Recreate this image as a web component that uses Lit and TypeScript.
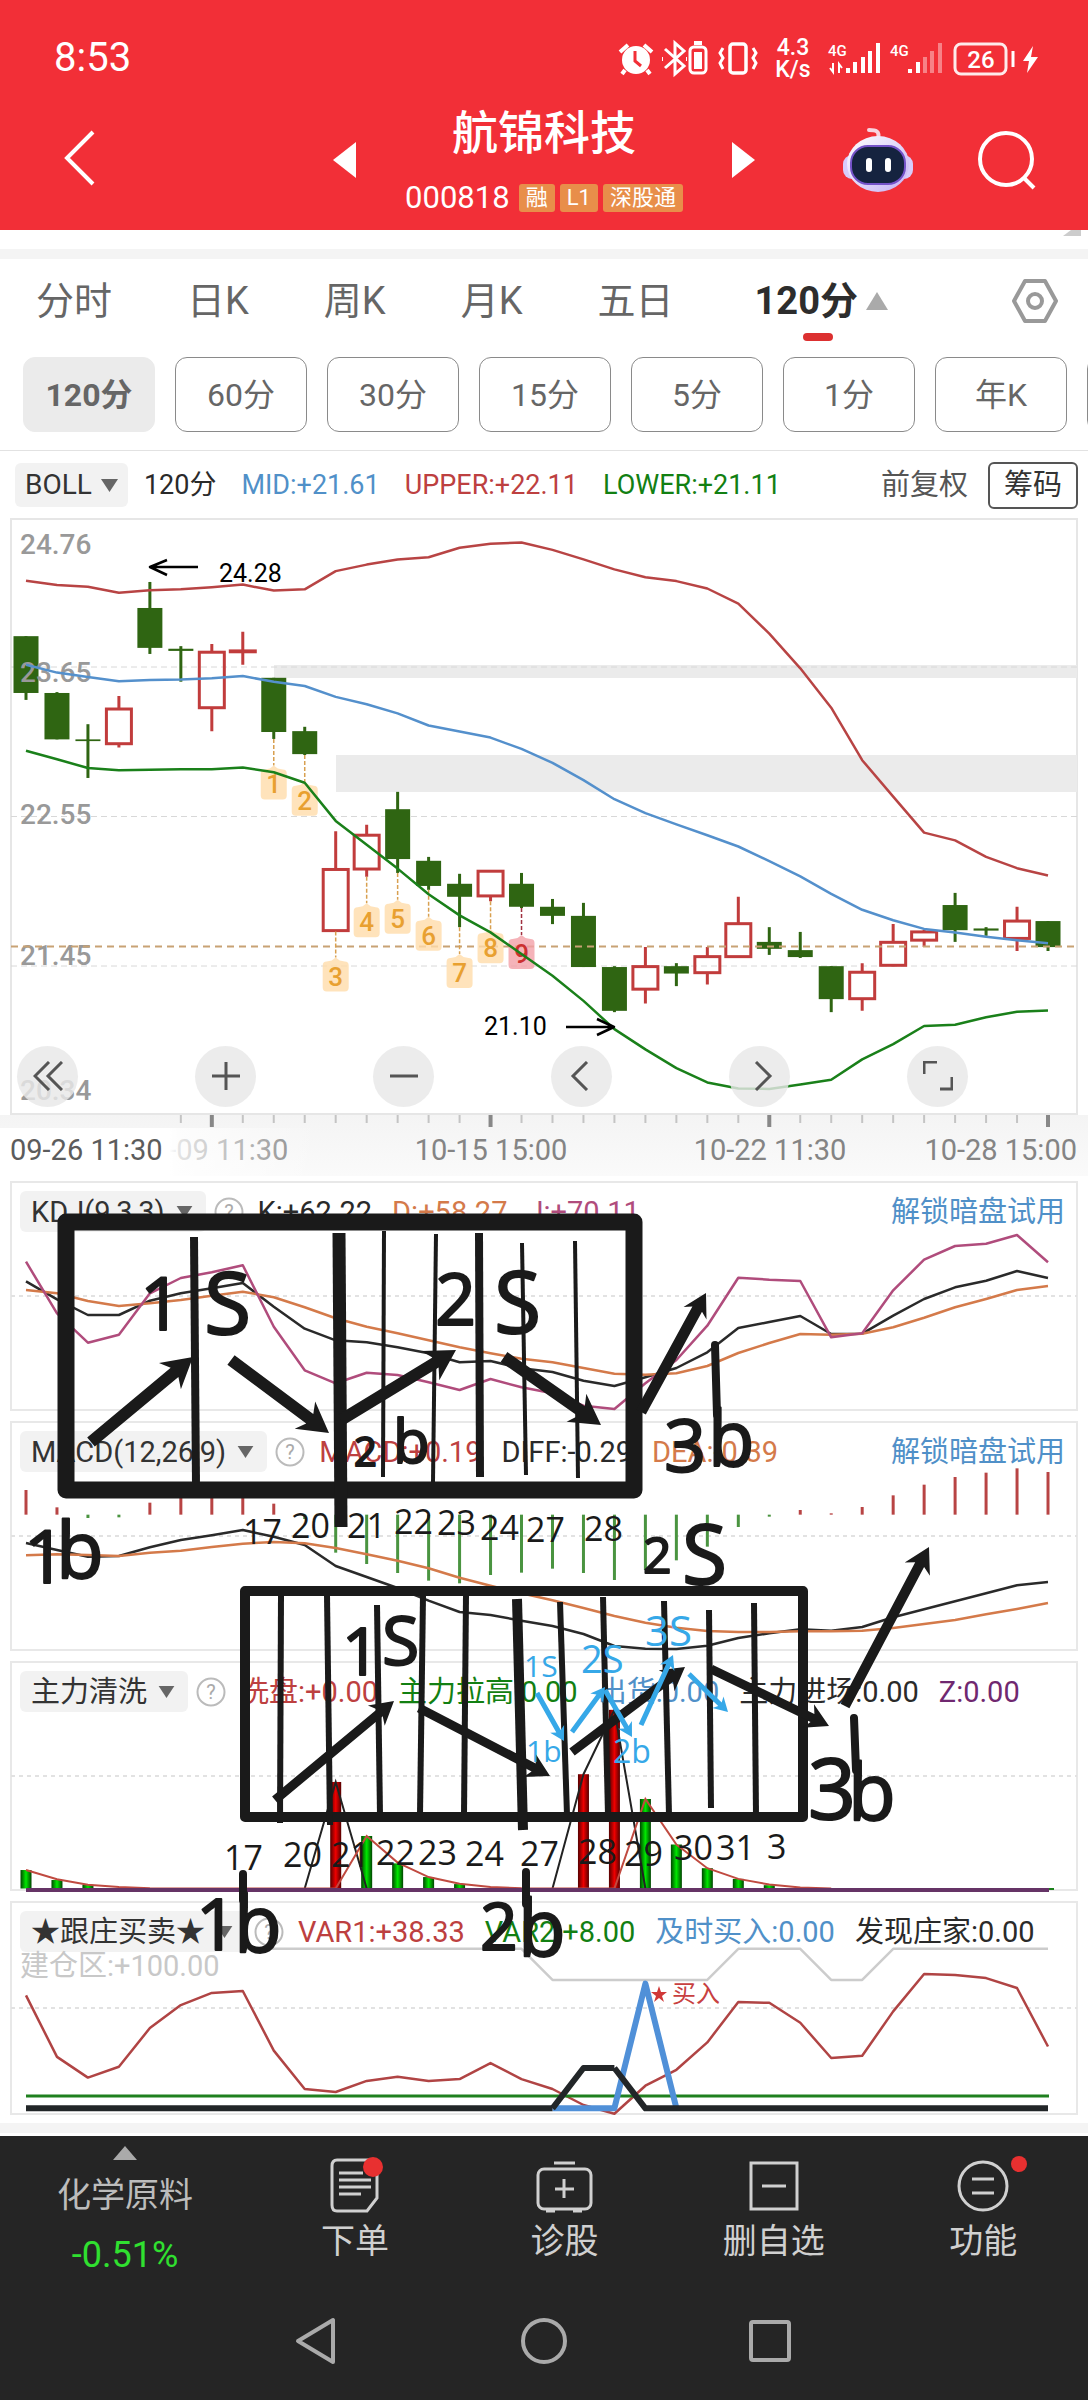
import { LitElement, html, svg, css } from "lit";
import { customElement } from "lit/decorators.js";
import { classMap } from "lit/directives/class-map.js";

const STEP = 30.97;
const FIRST = 26;
const cx = (i: number) => FIRST + i * STEP;

type Scale = (v: number) => number;
const priceY: Scale = (v) => 500 + v / 2.306;
const oscY: Scale = (v) => 1170 + v / 3;
const flowY: Scale = (v) => 1560 + v / 2.703;

const line = (values: number[], y: Scale, start = 0) =>
  values.map((v, i) => `${cx(start + i).toFixed(1)},${y(v).toFixed(1)}`).join(" ");

/* kind, body top, body bottom, wick top, wick bottom */
type Candle = ["g" | "r", number, number, number, number];
const CANDLES: Candle[] = [
  ["g", 314, 445, 314, 461], ["g", 445, 552, 443, 552], ["g", 552, 556, 517, 641],
  ["r", 482, 562, 452, 571], ["g", 249, 341, 189, 355], ["g", 343, 348, 337, 419],
  ["r", 351, 479, 332, 533], ["r", 348, 350, 304, 380], ["g", 410, 535, 410, 551],
  ["g", 533, 586, 523, 588], ["r", 852, 993, 764, 995], ["r", 773, 851, 749, 869],
  ["g", 713, 828, 673, 860], ["g", 832, 890, 823, 899], ["g", 885, 915, 862, 985],
  ["r", 856, 913, 854, 925], ["g", 885, 938, 860, 941], ["g", 938, 959, 920, 978],
  ["g", 959, 1077, 929, 1077], ["g", 1077, 1178, 1075, 1181], ["r", 1076, 1128, 1031, 1161],
  ["g", 1075, 1092, 1068, 1121], ["r", 1053, 1090, 1031, 1117], ["r", 977, 1053, 915, 1055],
  ["g", 1019, 1035, 985, 1049], ["g", 1038, 1054, 996, 1056], ["g", 1075, 1151, 1075, 1181],
  ["r", 1089, 1150, 1068, 1178], ["r", 1020, 1073, 978, 1075], ["r", 996, 1015, 991, 1031],
  ["g", 934, 992, 906, 1019], ["g", 988, 993, 985, 1005], ["r", 971, 1011, 938, 1040],
  ["g", 971, 1031, 971, 1040],
];
const UPPER = [186, 196, 200, 214, 208, 206, 201, 195, 209, 206, 164, 149, 137, 132, 110, 101, 98, 115, 137, 160, 178, 187, 204, 239, 308, 388, 479, 600, 684, 767, 785, 823, 849, 866];
const MID = [380, 398, 408, 418, 415, 414, 411, 406, 419, 429, 454, 471, 492, 520, 534, 548, 574, 606, 646, 690, 722, 748, 773, 799, 833, 868, 908, 945, 969, 989, 997, 1007, 1015, 1022];
const LOWER = [578, 598, 618, 623, 622, 621, 621, 617, 628, 652, 740, 795, 850, 909, 958, 997, 1047, 1097, 1155, 1220, 1267, 1310, 1343, 1357, 1358, 1348, 1337, 1290, 1255, 1213, 1210, 1193, 1180, 1177];
const COUNT_TAGS = [612, 650, 1055, 930, 922, 961, 1047, 990, 1003];
const PRICES: [string, number][] = [["24.76", 554], ["23.65", 682], ["22.55", 824], ["21.45", 965], ["20.34", 1100]];

const K = [334, 388, 435, 435, 392, 370, 355, 339, 410, 476, 511, 517, 532, 550, 577, 573, 595, 606, 632, 648, 622, 594, 547, 474, 456, 438, 492, 491, 437, 387, 352, 332, 303, 324];
const D = [360, 370, 393, 408, 400, 390, 377, 365, 382, 412, 445, 470, 490, 511, 532, 550, 566, 577, 594, 611, 614, 610, 588, 549, 519, 492, 494, 491, 472, 443, 412, 387, 360, 348];
const J = [275, 430, 518, 494, 370, 324, 307, 286, 470, 601, 640, 608, 615, 637, 660, 627, 652, 670, 707, 717, 640, 570, 467, 323, 329, 333, 502, 490, 361, 269, 228, 221, 195, 277];

const DIFF = [1119, 1140, 1160, 1158, 1132, 1110, 1096, 1080, 1100, 1125, 1188, 1221, 1254, 1292, 1326, 1335, 1352, 1368, 1392, 1428, 1436, 1437, 1427, 1404, 1390, 1378, 1382, 1371, 1342, 1318, 1294, 1270, 1246, 1236];
const DEA = [1156, 1153, 1155, 1158, 1148, 1142, 1131, 1121, 1116, 1120, 1134, 1153, 1172, 1195, 1223, 1247, 1270, 1291, 1314, 1338, 1358, 1373, 1383, 1386, 1386, 1384, 1384, 1382, 1374, 1362, 1350, 1333, 1317, 1299];
const MACD_ZERO = 1034;
const MACD = [960, 1012, 1044, 1042, 998, 965, 965, 965, 1001, 1047, 1148, 1182, 1209, 1232, 1240, 1215, 1208, 1196, 1209, 1230, 1200, 1171, 1130, 1071, 1040, 1020, 1030, 1011, 976, 944, 921, 908, 895, 906];

const FLOW_ZERO = 888;
const FLOW_BARS: [number, number, "r" | "g"][] = [
  [0, 838, "g"], [1, 865, "g"], [2, 878, "g"], [10, 600, "r"], [11, 746, "g"], [12, 820, "g"],
  [13, 857, "g"], [14, 876, "g"], [18, 579, "r"], [19, 405, "r"], [20, 646, "g"], [21, 769, "g"],
  [22, 833, "g"], [23, 862, "g"], [24, 879, "g"],
];
const FLOW_LINE = [838, 863, 878, 884, 887, 888, 888, 888, 888, 888, 888, 746, 818, 857, 875, 884, 887, 888, 888, 888, 646, 769, 833, 862, 877, 885, 888];

const VAR1 = [1177, 1343, 1399, 1370, 1265, 1203, 1170, 1165, 1326, 1430, 1438, 1408, 1397, 1408, 1403, 1360, 1403, 1430, 1473, 1497, 1421, 1378, 1304, 1195, 1197, 1251, 1346, 1340, 1220, 1119, 1122, 1130, 1157, 1315];
const BUILD = Array.from({ length: 34 }, (_, i) => ((i >= 17 && i <= 22) || i === 26 || i === 27 ? 1135 : 1051));
const FOUND = Array.from({ length: 34 }, (_, i) => (i === 18 || i === 19 ? 1373 : 1482));

/* x1, y1, x2, y2, width */
const STROKES: number[][] = [
  [194, 1237, 196, 1484, 8], [339, 1233, 341, 1527, 13], [384, 1231, 383, 1477, 4], [436, 1234, 433, 1482, 4],
  [479, 1233, 480, 1477, 8], [522, 1243, 526, 1475, 4], [575, 1241, 578, 1478, 4],
  [281, 1595, 280, 1823, 6], [327, 1595, 330, 1825, 6], [377, 1605, 380, 1815, 6], [423, 1595, 420, 1815, 6],
  [466, 1595, 464, 1815, 6], [517, 1599, 523, 1830, 10], [560, 1602, 567, 1815, 6], [603, 1597, 608, 1815, 6],
  [664, 1601, 669, 1815, 6], [709, 1610, 711, 1808, 6], [754, 1603, 756, 1815, 6],
];
/* tail x, tail y, tip x, tip y, shaft width, head length */
const ARROWS: number[][] = [
  [91, 1442, 193, 1357, 12, 30], [231, 1360, 329, 1433, 12, 30], [341, 1420, 456, 1350, 12, 30],
  [504, 1357, 601, 1425, 12, 30], [641, 1412, 706, 1293, 11, 23],
  [275, 1800, 394, 1701, 9, 23], [419, 1708, 550, 1776, 9, 23], [572, 1752, 685, 1667, 9, 23],
  [711, 1669, 829, 1726, 9, 23], [845, 1706, 929, 1547, 10, 25],
];
const BLUE_ARROWS: number[][] = [
  [537, 1693, 564, 1741, 5, 14], [572, 1732, 605, 1687, 5, 14], [605, 1690, 632, 1737, 5, 14],
  [641, 1725, 673, 1655, 5, 14], [689, 1674, 728, 1712, 5, 14],
];
/* characters with x, baseline, size */
type Glyph = [string, number, number, number];
const NOTES: Glyph[][] = [
  [["1", 140, 1330, 74], ["S", 204, 1334, 86]],
  [["2", 435, 1325, 72], ["S", 494, 1333, 86]],
  [["2", 354, 1466, 40], ["b", 393, 1463, 60]],
  [["3", 664, 1472, 74], ["b", 708, 1466, 76]],
  [["1", 24, 1583, 74], ["b", 56, 1578, 78]],
  [["2", 643, 1573, 50], ["S", 682, 1584, 82]],
  [["1", 342, 1675, 66], ["S", 382, 1665, 68]],
  [["1", 196, 1950, 72], ["b", 234, 1952, 78]],
  [["2", 480, 1950, 66], ["b", 518, 1956, 78]],
  [["3", 808, 1819, 84], ["b", 848, 1820, 78]],
];
const DAYS: [string, number, number][] = [
  ["17", 243, 1544], ["20", 291, 1538], ["21", 347, 1538], ["22", 394, 1534], ["23", 437, 1535], ["24", 480, 1540],
  ["27", 526, 1542], ["28", 584, 1541], ["17", 224, 1870], ["20", 283, 1867], ["21", 331, 1867], ["22", 376, 1865],
  ["23", 418, 1865], ["24", 465, 1866], ["27", 520, 1866], ["28", 578, 1864], ["29", 624, 1866], ["30", 674, 1860],
  ["31", 716, 1860], ["3", 767, 1859],
];
const BLUE_NOTES: [string, number, number, number][] = [
  ["1S", 524, 1677, 30], ["2S", 581, 1673, 38], ["3S", 645, 1646, 42], ["1b", 526, 1762, 30], ["2b", 613, 1763, 32],
];

const arrow = ([x1, y1, x2, y2, w, head]: number[]) => {
  const len = Math.hypot(x2 - x1, y2 - y1);
  const ux = (x2 - x1) / len;
  const uy = (y2 - y1) / len;
  const at = (along: number, side: number) =>
    `${(x2 - ux * along - uy * side).toFixed(1)},${(y2 - uy * along + ux * side).toFixed(1)}`;
  const h = w / 2;
  const wing = head * 0.57;
  const neck = head * 0.8;
  return svg`<polygon points="${[at(len, h), at(neck, h), at(head, wing), at(0, 0), at(head, -wing), at(neck, -h), at(len, -h)].join(" ")}" />`;
};

interface Reading { text: string; tone: string; }
interface Panel {
  name: string; readings: Reading[]; link: boolean; below?: string;
  top: number; height: number; frameTop: number; frameBottom: number; middle: number; plot: unknown;
}

@customElement("app-root")
export class AppRoot extends LitElement {
  static styles = css`
    :host { display: block; background: #fff; font-family: Roboto, "Noto Sans CJK SC", sans-serif; color: #333; }
    * { box-sizing: border-box; }
    button { font: inherit; color: inherit; background: none; border: 0; padding: 0; margin: 0; cursor: pointer; }
    a { text-decoration: none; }
    svg { display: block; }
    .header { background: #f22f37; color: #fff; height: 230px; }
    .status { display: flex; justify-content: space-between; align-items: center; padding: 34px 48px 0 54px; }
    .clock { font-size: 40px; line-height: 48px; }
    .bar { display: grid; grid-template-columns: 1fr auto 1fr; padding: 20px 52px 0; align-items: center; }
    .back { padding-left: 12px; }
    .center { display: flex; width: 422px; justify-content: space-between; align-items: center; }
    .stock { display: flex; flex-direction: column; align-items: center; gap: 14px; }
    .name { font-size: 46px; line-height: 62px; font-weight: 500; margin: 0; }
    .code { display: flex; gap: 5px; align-items: center; font-size: 31px; line-height: 40px; }
    .badge { background: #e88e4a; border-radius: 3px; font-size: 22px; line-height: 28px; padding: 0 7px; }
    .badge:first-of-type { margin-left: 4px; }
    .tools { display: flex; justify-content: flex-end; align-items: center; gap: 65px; }
    .peek { display: flex; justify-content: flex-end; height: 19px; padding-right: 7px; }
    .band { height: 10px; background: #f4f4f4; }
    .tabs { display: flex; align-items: center; height: 98px; padding: 0 30px 14px 36px; font-size: 38px; line-height: 56px; color: #666; }
    .tablist { display: flex; flex: 1; gap: 75px; align-items: center; }
    .tab { display: flex; align-items: center; gap: 8px; position: relative; }
    .tab.on { color: #2d2d2d; font-weight: 700; margin-left: 6px; }
    .tab.on::after { content: ""; position: absolute; left: 48px; bottom: -12px; width: 30px; height: 8px; border-radius: 4px; background: #dc3030; }
    .pills { display: flex; gap: 20px; padding: 0 0 18px 23px; overflow: hidden; border-bottom: 1px solid #e2e2e2; }
    .pill { flex: none; width: 132px; height: 75px; border: 1px solid #8a8a8a; border-radius: 12px; font-size: 32px; line-height: 40px; color: #666; }
    .pill.on { background: #ebebeb; border-color: #ebebeb; font-weight: 700; }
    .boll { display: flex; align-items: center; height: 60px; padding: 8px 10px 0 15px; font-size: 27px; line-height: 40px; gap: 25px; }
    .pick { display: flex; align-items: center; gap: 11px; background: #f2f2f2; border-radius: 6px; height: 41px; padding: 0 13px 0 11px; white-space: nowrap; color: #333; }
    .boll .pick { height: 44px; gap: 9px; padding: 0 10px; margin-right: -9px; font-size: 28px; }
    .right { margin-left: auto; display: flex; align-items: center; gap: 20px; font-size: 29px; color: #555; }
    .chips { width: 90px; height: 47px; border: 2px solid #555; border-radius: 6px; color: #333; }
    .main { position: relative; }
    .chart { width: 100%; height: auto; }
    .controls { position: absolute; left: 17px; right: 11%; top: 80.4%; display: flex; justify-content: space-between; }
    .round { width: 61px; height: 61px; border-radius: 50%; background: rgba(232, 232, 232, 0.82); display: grid; place-items: center; }
    .panels { position: relative; }
    .panel { display: grid; }
    .panel > * { grid-area: 1 / 1; min-width: 0; }
    .head { align-self: start; padding: 15px 23px 0 20px; font-size: 29px; }
    .row { display: flex; align-items: center; height: 41px; line-height: 40px; white-space: nowrap; }
    .help { margin: 0 14px 0 8px; }
    .readings { display: flex; gap: 20px; }
    .unlock { margin-left: auto; color: #5090c8; }
    .below { color: #c8c8c8; line-height: 28px; }
    .ink { position: absolute; inset: 0; width: 100%; height: 100%; pointer-events: none; }
    .blue { color: #5090c8; } .red { color: #bd4040; } .green { color: #128012; }
    .orange { color: #d47a4a; } .pink { color: #b04c7c; } .purple { color: #702870; } .dark { color: #2a2a2a; }
    .axis { font-size: 28px; fill: #999; font-weight: 500; }
    .date { font-size: 29px; fill: #848484; }
    .date.first { fill: #5c5c5c; }
    .mark { font-size: 25px; fill: #000; }
    .count { font-size: 26px; font-weight: 500; text-anchor: middle; }
    .hand { font-family: "Open Sans", sans-serif; }
    .gap { height: 13px; border-bottom: 3px solid #fff; background: #f4f4f4; }
    .nav { display: grid; grid-template-columns: 23% repeat(4, 1fr); background: #252525; color: #d0d0d0; font-size: 34px; line-height: 50px; height: 150px; }
    .item { display: flex; flex-direction: column; align-items: center; padding-top: 20px; line-height: 50px; }
    .item.sector { padding-top: 10px; color: #bcbcbc; }
    .sector .title { margin-top: 10px; }
    .drop { font-size: 36px; color: #30e030; margin-top: 10px; }
    .system { display: flex; justify-content: center; align-items: flex-start; gap: 178px; padding: 31px 0 35px; background: #252525; }
  `;

  private caret(w = 17, h = 13) {
    return html`<svg width=${w} height=${h} viewBox="0 0 17 13" aria-hidden="true"><path d="M0 0H17L8.500 13Z" fill="#666" /></svg>`;
  }

  private statusIcons() {
    return html`<svg width="424" height="46" viewBox="616 34 424 46" fill="none" stroke="#fff" stroke-width="2.500" role="img" aria-label="status">
      <circle cx="636" cy="59" r="14" fill="#fff" stroke="none" />
      <path d="M620 51l8-7M652 51l-8-7M625 69l-3 4M647 69l3 4" stroke-width="4" />
      <path d="M635 50v10l6 5" stroke="#f22f37" stroke-width="3" />
      <path d="M665 48l19 17-9 8V42l9 8-19 17" stroke-width="3" />
      <path d="M662 58h1M686 58h1" stroke-width="4" />
      <rect x="690" y="46" width="16" height="26" rx="4" stroke-width="3" />
      <path d="M694 42h8" stroke-width="4" /><rect x="694" y="51" width="8" height="17" fill="#fff" stroke="none" />
      <rect x="730" y="43" width="16" height="29" rx="3" stroke-width="3.500" />
      <path d="M723 47l-3 5 3 5-3 5 3 6M753 47l3 5-3 5 3 5-3 6" stroke-width="3" />
      <g fill="#fff" stroke="none" font-size="23" font-weight="500" font-family="Roboto">
        <text x="793" y="54" text-anchor="middle">4.3</text>
        <text x="793" y="76" text-anchor="middle">K/s</text>
        <text x="828" y="55" font-size="15">4G</text><text x="890" y="55" font-size="15">4G</text>
        <text x="981" y="67" text-anchor="middle" font-size="24">26</text>
      </g>
      <path d="M833 62v9l-3-4M839 72v-9l3 4" stroke-width="2" />
      <path d="M848 72v-5M855 72v-11M863 72v-16M870 72v-22M878 72v-30" stroke-width="4" />
      <path d="M910 72v-4M918 72v-11" stroke-width="4" />
      <path d="M925 72v-16M932 72v-22M940 72v-30" stroke-width="4" opacity=".4" />
      <rect x="955" y="43" width="51" height="30" rx="6" stroke-width="3" opacity=".9" />
      <path d="M1013 50v16" stroke-width="3" />
      <path d="M1033 45l-10 15h6l-2 12 11-16h-7z" fill="#fff" stroke="none" />
    </svg>`;
  }

  private header() {
    return html`<header class="header">
      <div class="status"><span class="clock">8:53</span>${this.statusIcons()}</div>
      <div class="bar">
        <div class="back"><button aria-label="返回"><svg width="32" height="56" viewBox="0 0 32 56"><path d="M29 2L3 28l26 26" fill="none" stroke="#fff" stroke-width="4" /></svg></button></div>
        <div class="center">
          <button aria-label="上一只"><svg width="23" height="36" viewBox="0 0 23 36"><path d="M23 0v36L0 18z" fill="#fff" /></svg></button>
          <div class="stock">
            <h1 class="name">航锦科技</h1>
            <div class="code">000818<span class="badge">融</span><span class="badge">L1</span><span class="badge">深股通</span></div>
          </div>
          <button aria-label="下一只"><svg width="23" height="36" viewBox="0 0 23 36"><path d="M0 0v36L23 18z" fill="#fff" /></svg></button>
        </div>
        <div class="tools">
          <button aria-label="助手"><svg width="70" height="66" viewBox="0 0 70 66">
            <defs><linearGradient id="bot" x1="0" y1="0" x2="1" y2="1"><stop offset="0" stop-color="#fff" /><stop offset="1" stop-color="#c4b0f4" /></linearGradient></defs>
            <path d="M35 12c2-8-2-9-9-9" fill="none" stroke="#f8d4e0" stroke-width="4" stroke-linecap="round" />
            <rect x="0" y="28" width="70" height="24" rx="9" fill="#d8ccfa" />
            <ellipse cx="35" cy="37" rx="31" ry="28" fill="url(#bot)" />
            <rect x="8" y="19" width="54" height="38" rx="17" fill="#15233f" stroke="#7452c8" stroke-width="2" />
            <rect x="23" y="31" width="6" height="14" rx="3" fill="#fff" /><rect x="42" y="31" width="6" height="14" rx="3" fill="#fff" />
          </svg></button>
          <button aria-label="搜索"><svg width="58" height="60" viewBox="0 0 58 60" fill="none" stroke="#fff" stroke-width="4"><circle cx="28" cy="29" r="26" /><path d="M46 48l10 10" /></svg></button>
        </div>
      </div>
    </header>`;
  }

  private periods() {
    const tabs = ["分时", "日K", "周K", "月K", "五日"];
    const pills = ["120分", "60分", "30分", "15分", "5分", "1分", "年K", ""];
    return html`
      <div class="peek"><svg width="18" height="6" viewBox="0 0 18 6"><path d="M8 0H18V6H0Z" fill="#ccc" /></svg></div>
      <div class="band"></div>
      <nav class="tabs">
        <div class="tablist">
          ${tabs.map((t) => html`<button class="tab">${t}</button>`)}
          <button class="tab on">120分<svg width="22" height="18" viewBox="0 0 22 18"><path d="M11 0L22 18H0Z" fill="#aaa" /></svg></button>
        </div>
        <button aria-label="设置"><svg width="46" height="44" viewBox="0 0 46 44" fill="none" stroke="#999" stroke-width="4" stroke-linejoin="round"><path d="M13 2h20l11 20-11 20H13L2 22z" /><circle cx="23" cy="22" r="7" /></svg></button>
      </nav>
      <div class="pills">${pills.map((p, i) => html`<button class=${classMap({ pill: true, on: i === 0 })}>${p}</button>`)}</div>
      <div class="boll">
        <button class="pick">BOLL ${this.caret()}</button>
        <span class="dark">120分</span><span class="blue">MID:+21.61</span><span class="red">UPPER:+22.11</span><span class="green">LOWER:+21.11</span>
        <div class="right"><span>前复权</span><button class="chips">筹码</button></div>
      </div>`;
  }

  private candle([kind, top, bottom, high, low]: Candle, i: number) {
    const x = cx(i);
    const t = priceY(top);
    const b = priceY(bottom);
    return kind === "g"
      ? svg`<path d="M${x} ${priceY(high)}V${priceY(low)}" stroke="#2f6512" stroke-width="3" /><rect x=${x - 12.5} y=${t} width="25" height=${b - t} fill="#2f6512" />`
      : svg`<path d="M${x} ${priceY(high)}V${t}M${x} ${b}V${priceY(low)}" stroke="#c13c3c" stroke-width="3" /><rect x=${x - 12.5} y=${t} width="25" height=${b - t} fill="none" stroke="#c13c3c" stroke-width="3" />`;
  }

  private countTag(top: number, n: number) {
    const i = n + 8;
    const x = cx(i);
    const y = priceY(top);
    const hot = n === 8;
    return svg`<path d="M${x} ${priceY(CANDLES[i][4])}V${y}" stroke=${hot ? "#a03040" : "#d8a050"} stroke-width="1.500" stroke-dasharray="4 2" />
      <path d="M${x - 9} ${y + 4}L${x - 4} ${y + 3}L${x} ${y}L${x + 4} ${y + 3}L${x + 9} ${y + 4}Q${x + 13} ${y + 4} ${x + 13} ${y + 8}V${y + 30}Q${x + 13} ${y + 34} ${x + 9} ${y + 34}H${x - 9}Q${x - 13} ${y + 34} ${x - 13} ${y + 30}V${y + 8}Q${x - 13} ${y + 4} ${x - 9} ${y + 4}Z" fill=${hot ? "#f2a0a8" : "#ffdcaa"} opacity=".8" />
      <text class="count" x=${x} y=${y + 28} fill=${hot ? "#cc3030" : "#e8a030"}>${n + 1}</text>`;
  }

  private mainChart() {
    const ticks = Array.from({ length: 29 }, (_, n) => n + 5);
    return html`<div class="main">
      <svg class="chart" viewBox="0 511 1088 665" role="img" aria-label="BOLL">
        <defs>
          <linearGradient id="shade" x1="0" x2="0" y1="0" y2="1"><stop offset="0" stop-color="#f4f4f4" /><stop offset="1" stop-color="#fafafa" /></linearGradient>
          <linearGradient id="fade"><stop offset="0" stop-color="#fff" /><stop offset=".53" stop-color="#fff" /><stop offset=".56" stop-color="#fff" stop-opacity=".78" /><stop offset="1" stop-color="#fff" stop-opacity="0" /></linearGradient>
        </defs>
        <rect x="0" y="1115" width="1088" height="61" fill="url(#shade)" />
        <rect x="11" y="519" width="1066" height="595" fill="#fff" stroke="#e6e6e6" stroke-width="2" />
        <rect x="274" y="665" width="803" height="13" fill="#ebebeb" /><rect x="336" y="755" width="741" height="37" fill="#ebebeb" />
        <path d="M11 667H1077M11 816.500H1077M11 966H1077" stroke="#d8d8d8" stroke-dasharray="6 4" />
        ${CANDLES.map((c, i) => this.candle(c, i))}
        ${PRICES.map(([t, y]) => svg`<text class="axis" x="20" y=${y}>${t}</text>`)}
        <path d="M11 946.500H1077" stroke="#c8a274" stroke-width="2" stroke-dasharray="7 5" />
        ${COUNT_TAGS.map((t, n) => this.countTag(t, n))}
        <g fill="none" stroke-width="2.500" stroke-linejoin="round">
          <polyline points=${line(UPPER, priceY)} stroke="#b84444" />
          <polyline points=${line(MID, priceY)} stroke="#5490cc" />
          <polyline points=${line(LOWER, priceY)} stroke="#1a801a" />
          <path d="M198 567H150M167 560L150 567L167 575M566 1027H614M597 1019L614 1027L597 1035" stroke="#000" />
        </g>
        <text class="mark" x="219" y="582">24.28</text><text class="mark" x="484" y="1035">21.10</text>
        ${ticks.map((i) => svg`<path d="M${cx(i)} 1115v${i % 9 === 6 ? 12 : 8}" stroke=${i % 9 === 6 ? "#888" : "#c4c4c4"} stroke-width=${i % 9 === 6 ? 4 : 2} />`)}
        <text class="date" x="212" y="1160" text-anchor="middle">10-09 11:30</text>
        <rect x="0" y="1128" width="320" height="48" fill="url(#fade)" />
        <text class="date first" x="10" y="1160">09-26 11:30</text>
        <text class="date" x="491" y="1160" text-anchor="middle">10-15 15:00</text>
        <text class="date" x="770" y="1160" text-anchor="middle">10-22 11:30</text>
        <text class="date" x="1077" y="1160" text-anchor="end">10-28 15:00</text>
      </svg>
      <div class="controls">
        ${[
          ["最早", "M16 1L2 15l14 14M29 1L15 15l14 14"],
          ["放大", "M1 15h28M15 1v28"],
          ["缩小", "M1 15h28"],
          ["向左", "M20 1L6 15l14 14"],
          ["向右", "M11 1l14 14-14 14"],
          ["全屏", "M1 13V1h13M17 28h12V16"],
        ].map(([label, d]) => html`<button class="round" aria-label=${label}><svg width="30" height="30" viewBox="0 0 30 30"><path d=${d} fill="none" stroke="#555" stroke-width="3" /></svg></button>`)}
      </div>
    </div>`;
  }

  private panel(p: Panel) {
    return html`<section class="panel">
      <svg class="chart" viewBox="0 ${p.top} 1088 ${p.height}" role="img" aria-label=${p.name}>
        <rect x="11" y=${p.frameTop} width="1066" height=${p.frameBottom - p.frameTop} fill="none" stroke="#e8e8e8" stroke-width="2" />
        <path d="M11 ${p.middle}H1077" stroke="#e2e2e2" stroke-width="2" stroke-dasharray="4 4" />
        ${p.plot}
      </svg>
      <div class="head">
        <div class="row">
          <button class="pick">${p.name}${this.caret(17, 12)}</button>
          <button class="help" aria-label="说明"><svg width="30" height="30" viewBox="0 0 30 30"><circle cx="15" cy="15" r="13.500" fill="none" stroke="#bbb" stroke-width="2" /><text x="15" y="22" text-anchor="middle" font-size="20" fill="#aaa">?</text></svg></button>
          <div class="readings">${p.readings.map((r) => html`<span class=${r.tone}>${r.text}</span>`)}</div>
          ${p.link ? html`<a class="unlock" href="#">解锁暗盘试用</a>` : ""}
        </div>
        ${p.below ? html`<div class="below">${p.below}</div>` : ""}
      </div>
    </section>`;
  }

  private panels(): Panel[] {
    return [
      {
        name: "KDJ(9,3,3)", link: true, top: 1176, height: 240, frameTop: 1182, frameBottom: 1410, middle: 1296,
        readings: [{ text: "K:+62.22", tone: "dark" }, { text: "D:+58.27", tone: "orange" }, { text: "J:+70.11", tone: "pink" }],
        plot: svg`<g fill="none" stroke-width="2.500" stroke-linejoin="round">
          <polyline points=${line(K, oscY)} stroke="#2a2a2a" /><polyline points=${line(D, oscY)} stroke="#d47a4a" /><polyline points=${line(J, oscY)} stroke="#b04c7c" /></g>`,
      },
      {
        name: "MACD(12,26,9)", link: true, top: 1416, height: 240, frameTop: 1422, frameBottom: 1650, middle: 1536,
        readings: [{ text: "MACD:+0.19", tone: "red" }, { text: "DIFF:-0.29", tone: "dark" }, { text: "DEA:-0.39", tone: "orange" }],
        plot: svg`${MACD.map((v, i) => svg`<path d="M${cx(i)} ${oscY(MACD_ZERO)}V${oscY(v)}" stroke=${v < MACD_ZERO ? "#b84444" : "#4a9440"} stroke-width="3" />`)}
          <g fill="none" stroke-width="2.500" stroke-linejoin="round"><polyline points=${line(DIFF, oscY)} stroke="#2a2a2a" /><polyline points=${line(DEA, oscY)} stroke="#d47a4a" /></g>`,
      },
      {
        name: "主力清洗", link: false, top: 1656, height: 240, frameTop: 1662, frameBottom: 1890, middle: 1776,
        readings: [
          { text: "洗盘:+0.00", tone: "red" }, { text: "主力拉高:0.00", tone: "green" }, { text: "出货:0.00", tone: "blue" },
          { text: "主力进场:0.00", tone: "dark" }, { text: "Z:0.00", tone: "purple" },
        ],
        plot: svg`<defs>
            <linearGradient id="bar-r"><stop offset="0" stop-color="#500" /><stop offset=".5" stop-color="#f00000" /><stop offset="1" stop-color="#500" /></linearGradient>
            <linearGradient id="bar-g"><stop offset="0" stop-color="#040" /><stop offset=".5" stop-color="#00e800" /><stop offset="1" stop-color="#040" /></linearGradient>
          </defs>
          ${FLOW_BARS.map(([i, v, k]) => svg`<rect x=${cx(i) - 5.5} y=${flowY(v)} width="11" height=${flowY(FLOW_ZERO) - flowY(v)} fill=${`url(#bar-${k})`} />`)}
          <g fill="none" stroke-width="2">
            <polyline points=${line([888, 600, 888], flowY, 9)} stroke="#222" /><polyline points=${line([888, 579, 405, 888], flowY, 17)} stroke="#222" />
            <polyline points=${line(FLOW_LINE, flowY)} stroke="#c04a40" />
            <path d="M26 1890H1049" stroke="#653466" stroke-width="4" /><path d="M1049 1889H1054" stroke="#1a801a" />
          </g>`,
      },
      {
        name: "★跟庄买卖★", link: false, top: 1896, height: 227, frameTop: 1902, frameBottom: 2114, middle: 2008, below: "建仓区:+100.00",
        readings: [
          { text: "VAR1:+38.33", tone: "red" }, { text: "VAR2:+8.00", tone: "green" },
          { text: "及时买入:0.00", tone: "blue" }, { text: "发现庄家:0.00", tone: "dark" },
        ],
        plot: svg`<g fill="none" stroke-width="2.500" stroke-linejoin="round">
            <polyline points=${line(BUILD, flowY)} stroke="#ccc" /><polyline points=${line(VAR1, flowY)} stroke="#b04444" />
            <path d="M26 2096H1049" stroke="#1f801f" stroke-width="3" />
            <polyline points=${line([1482, 1482, 1482, 1145, 1482], flowY, 17)} stroke="#5090d8" stroke-width="6" />
            <polyline points=${line(FOUND.slice(0, 18), flowY)} stroke="#222628" stroke-width="6" />
            <polyline points=${line([1482, 1373, 1373], flowY, 17)} stroke="#222628" stroke-width="6" />
            <polyline points=${line(FOUND.slice(19), flowY, 19)} stroke="#222628" stroke-width="6" />
          </g>
          <path d="M659 1986l2 6h6l-5 4 2 6-5-4-5 4 2-6-5-4h6z" fill="#d03838" />
          <text x="672" y="2002" font-size="24" fill="#c84040">买入</text>`,
      },
    ];
  }

  private ink() {
    return html`<svg class="ink" viewBox="0 1176 1088 947" aria-label="notes">
      <g fill="none" stroke="#1a1a1a" stroke-linejoin="round">
        <rect x="66" y="1222" width="568" height="268" stroke-width="17" /><rect x="245" y="1591" width="558" height="226" stroke-width="10" />
        ${STROKES.map(([a, b, c, d, w]) => svg`<path d="M${a} ${b}L${c} ${d}" stroke-width=${w} />`)}
        <path d="M715 1345L717 1415M854 1718L856 1770M243 1874V1900M526 1872V1904" stroke-width="8" stroke-linecap="round" />
      </g>
      <g fill="#1a1a1a">${ARROWS.map(arrow)}</g>
      <g class="hand" fill="#1a1a1a" stroke="#1a1a1a" stroke-linejoin="round" stroke-width="2">
        ${NOTES.map((note) => svg`<text>${note.map(([c, x, y, s]) => svg`<tspan x=${x} y=${y} font-size=${s}>${c}</tspan>`)}</text>`)}
      </g>
      <g class="hand" fill="#1a1a1a" font-size="34">${DAYS.map(([t, x, y]) => svg`<text x=${x} y=${y}>${t}</text>`)}</g>
      <g fill="#36a8e8">${BLUE_ARROWS.map(arrow)}</g>
      <g class="hand" fill="#36a8e8">${BLUE_NOTES.map(([t, x, y, s]) => svg`<text x=${x} y=${y} font-size=${s}>${t}</text>`)}</g>
    </svg>`;
  }

  private footer() {
    const icon = (body: unknown) => html`<svg width="60" height="60" viewBox="0 0 60 60" overflow="visible" fill="none" stroke="#d0d0d0" stroke-width="3">${body}</svg>`;
    const items: [string, unknown][] = [
      ["下单", svg`<path d="M12 4h32q8 0 8 8v30l-10 13H12q-5 0-5-6V10q0-6 5-6z" /><path d="M14 17h24M14 24h32M14 31h32M14 38h22" /><circle cx="48" cy="11" r="10" fill="#e83030" stroke="none" />`],
      ["诊股", svg`<rect x="4" y="13" width="53" height="40" rx="6" /><path d="M20 7h21M30 23v19M21 33h19M12 55h9M39 55h9" />`],
      ["删自选", svg`<rect x="7" y="7" width="46" height="46" /><path d="M18 30h24" />`],
      ["功能", svg`<circle cx="30" cy="30" r="24" /><path d="M19 23h22M19 37h22" /><circle cx="66" cy="8" r="8" fill="#e83030" stroke="none" />`],
    ];
    return html`<div class="gap"></div>
      <nav class="nav">
        <button class="item sector"><svg width="24" height="14" viewBox="0 0 24 14"><path d="M12 0L24 14H0Z" fill="#aaa" /></svg><span class="title">化学原料</span><span class="drop">-0.51%</span></button>
        ${items.map(([label, body]) => html`<button class="item">${icon(body)}<span>${label}</span></button>`)}
      </nav>
      <div class="system">
        <button aria-label="后退"><svg width="48" height="48" viewBox="0 0 48 48" fill="none" stroke="#aaa" stroke-width="4" stroke-linejoin="round"><path d="M39 3v42L4 24z" /></svg></button>
        <button aria-label="主页"><svg width="48" height="48" viewBox="0 0 48 48" fill="none" stroke="#aaa" stroke-width="4"><circle cx="24" cy="24" r="21" /></svg></button>
        <button aria-label="最近"><svg width="48" height="48" viewBox="0 0 48 48" fill="none" stroke="#aaa" stroke-width="4"><rect x="5" y="5" width="38" height="38" rx="2" /></svg></button>
      </div>`;
  }

  render() {
    return html`${this.header()}${this.periods()}${this.mainChart()}
      <div class="panels">${this.panels().map((p) => this.panel(p))}${this.ink()}</div>
      ${this.footer()}`;
  }
}
